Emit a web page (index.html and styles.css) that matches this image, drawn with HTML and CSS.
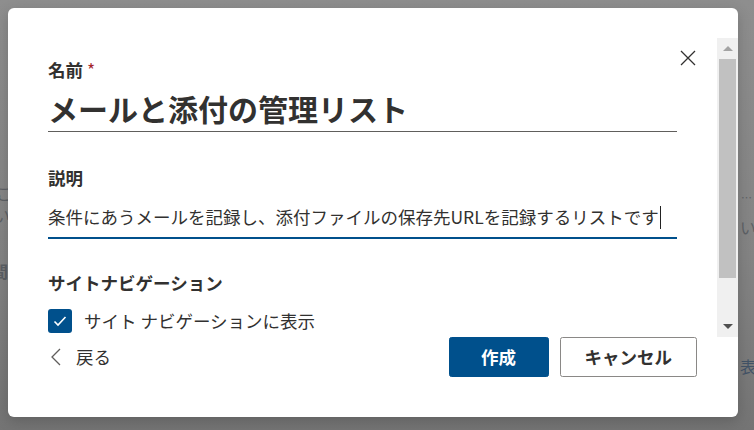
FILE: index.html
```html
<!DOCTYPE html>
<html lang="ja">
<head>
<meta charset="utf-8">
<link rel="stylesheet" href="styles.css">
</head>
<body>
<div class="backdrop">
  <span class="bg-frag bg-l1">こ</span>
  <span class="bg-frag bg-l2">い</span>
  <span class="bg-frag bg-l3">間</span>
  <span class="bg-frag bg-r1">…</span>
  <span class="bg-frag bg-r2">い</span>
  <span class="bg-frag bg-r3">表</span>
</div>
<div class="dialog">
  <button class="close" aria-label="閉じる">
    <svg width="16" height="16" viewBox="0 0 16 16"><path d="M1 1 L15 15 M15 1 L1 15" stroke="#323130" stroke-width="1.3" fill="none"/></svg>
  </button>
  <div class="top-gap"></div>
  <div class="main">
    <div class="content">
      <div class="label">名前 <span class="req">*</span></div>
      <div class="title-input">メールと添付の管理リスト</div>
      <div class="label label-desc">説明</div>
      <div class="desc-input">条件にあうメールを記録し、添付ファイルの保存先URLを記録するリストです<span class="caret"></span></div>
      <div class="section">サイトナビゲーション</div>
      <div class="check-row">
        <span class="checkbox">
          <svg width="16" height="16" viewBox="0 0 16 16"><path d="M2.5 8.5 L6 12 L13.5 4" stroke="#fff" stroke-width="1.6" fill="none"/></svg>
        </span>
        <span class="check-label">サイト ナビゲーションに表示</span>
      </div>
    </div>
    <div class="scrollbar">
      <div class="sb-btn"><span class="tri-up"></span></div>
      <div class="sb-track"><div class="sb-thumb"></div></div>
      <div class="sb-btn"><span class="tri-down"></span></div>
    </div>
  </div>
  <div class="footer">
    <div class="back">
      <svg width="12" height="18" viewBox="0 0 12 18"><path d="M10 1 L2 9 L10 17" stroke="#605e5c" stroke-width="1.3" fill="none"/></svg>
      <span class="back-text">戻る</span>
    </div>
    <div class="buttons">
      <button class="btn btn-primary">作成</button>
      <button class="btn btn-default">キャンセル</button>
    </div>
  </div>
</div>
</body>
</html>
```

FILE: styles.css
```css
* { box-sizing: border-box; }
html, body { margin: 0; padding: 0; }
body {
  width: 754px;
  height: 430px;
  overflow: hidden;
  background: linear-gradient(180deg, #8e8e8e 0%, #838383 60%, #747474 100%);
  font-family: "Noto Sans CJK JP", "Noto Sans", sans-serif;
  color: #323130;
  position: relative;
  padding: 8px 0 0 8px;
}
.backdrop {
  position: absolute;
  inset: 0;
  z-index: 0;
}
.bg-frag {
  position: absolute;
  font-size: 16px;
  color: #2e3640;
  opacity: 0.45;
  line-height: 18px;
}
.bg-l1 { left: -4px; top: 184px; }
.bg-l2 { left: -6px; top: 206px; }
.bg-l3 { left: -8px; top: 262px; font-weight: 700; }
.bg-r1 { left: 741px; top: 188px; font-size: 11px; }
.bg-r2 { left: 740px; top: 218px; }
.bg-r3 { left: 740px; top: 357px; color: #1d3a5c; opacity: 0.6; }

.dialog {
  position: relative;
  z-index: 1;
  width: 730px;
  height: 409px;
  background: #fff;
  border-radius: 6px;
  overflow: hidden;
  display: flex;
  flex-direction: column;
  box-shadow: 0 4px 14px rgba(0,0,0,0.18);
}
.close {
  position: absolute;
  top: 42px;
  right: 42px;
  width: 16px;
  height: 16px;
  padding: 0;
  border: 0;
  background: transparent;
  display: flex;
}
.top-gap { height: 30px; flex: none; }
.main {
  height: 299px;
  flex: none;
  display: flex;
}
.content {
  flex: 1;
  padding: 20px 40px 0 40px;
  overflow: hidden;
}
.label {
  font-size: 17.5px;
  font-weight: 700;
  line-height: 24px;
  height: 24px;
}
.req { color: #a4262c; font-weight: 400; }
.title-input {
  margin-top: 6px;
  font-size: 30px;
  font-weight: 700;
  line-height: 40px;
  padding-bottom: 3px;
  border-bottom: 1px solid #605e5c;
  white-space: nowrap;
}
.label-desc { margin-top: 34px; }
.desc-input {
  margin-top: 13px;
  font-size: 17.5px;
  line-height: 28px;
  padding-bottom: 6px;
  border-bottom: 2px solid #00508c;
  white-space: nowrap;
  display: flex;
  align-items: center;
}
.caret {
  display: inline-block;
  width: 1px;
  height: 23px;
  background: #222;
  margin-left: 1px;
}
.section {
  margin-top: 32px;
  font-size: 17.5px;
  font-weight: 700;
  line-height: 24px;
}
.check-row {
  margin-top: 14px;
  display: flex;
  align-items: center;
  gap: 12px;
}
.checkbox {
  width: 24px;
  height: 24px;
  border-radius: 3px;
  background: #00508c;
  display: flex;
  align-items: center;
  justify-content: center;
  flex: none;
}
.check-label {
  font-size: 17.5px;
  line-height: 24px;
  color: #323130;
}
.scrollbar {
  width: 21px;
  flex: none;
  background: #f0f0f0;
  display: flex;
  flex-direction: column;
}
.sb-btn {
  height: 21px;
  display: flex;
  align-items: center;
  justify-content: center;
  flex: none;
}
.tri-up {
  width: 0; height: 0;
  border-left: 5px solid transparent;
  border-right: 5px solid transparent;
  border-bottom: 5px solid #a3a3a3;
}
.tri-down {
  width: 0; height: 0;
  border-left: 5px solid transparent;
  border-right: 5px solid transparent;
  border-top: 5px solid #505050;
}
.sb-track {
  flex: 1;
  padding: 0 2px;
}
.sb-thumb {
  height: 219px;
  background: #c1c1c1;
}
.footer {
  height: 80px;
  flex: none;
  display: flex;
  justify-content: space-between;
  align-items: flex-start;
  padding: 0 41px 0 40px;
}
.back {
  height: 40px;
  display: flex;
  align-items: center;
  gap: 14px;
  padding-left: 2px;
}
.back-text {
  font-size: 17.5px;
  color: #323130;
  line-height: 24px;
}
.buttons {
  display: flex;
  gap: 11px;
}
.btn {
  height: 40px;
  min-width: 100px;
  padding: 0 24px;
  border-radius: 2.5px;
  font-family: "Noto Sans CJK JP", "Noto Sans", sans-serif;
  font-size: 17.5px;
  font-weight: 700;
  line-height: 24px;
}
.btn-primary {
  background: #00508c;
  border: 1px solid #00508c;
  color: #fff;
}
.btn-default {
  background: #fff;
  border: 1px solid #8a8886;
  color: #323130;
}
```
